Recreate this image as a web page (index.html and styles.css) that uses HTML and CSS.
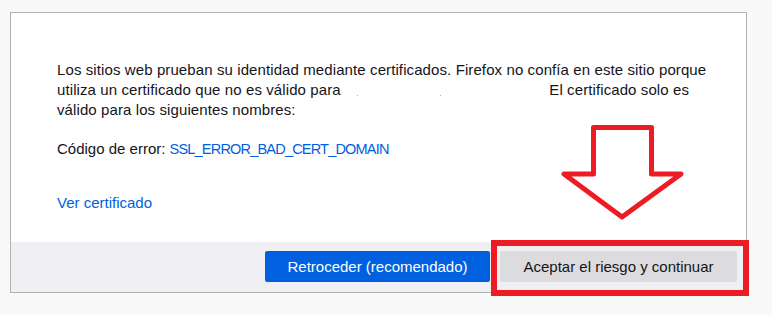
FILE: index.html
```html
<!DOCTYPE html>
<html lang="es">
<head>
    <meta charset="UTF-8">
    <meta name="viewport" content="width=device-width, initial-scale=1.0">
    <title>Advertencia: riesgo potencial de seguridad</title>
    <link rel="stylesheet" href="styles.css">
</head>
<body>
    <div class="page">
        <div class="advanced-panel">
            <div class="panel-body">
                <p class="desc">
                    Los sitios web prueban su identidad mediante certificados. Firefox no confía en este sitio porque
                    utiliza un certificado que no es válido para <span class="redacted"></span> El certificado solo es
                    válido para los siguientes nombres:
                </p>

                <p class="error-code">Código de error: <a href="#" class="link code">SSL_ERROR_BAD_CERT_DOMAIN</a></p>

                <p class="view-cert"><a href="#" class="link">Ver certificado</a></p>
            </div>

            <div class="panel-footer">
                <button class="btn btn-primary">Retroceder (recomendado)</button>
                <button class="btn btn-secondary">Aceptar el riesgo y continuar</button>
            </div>
        </div>

        <!-- screenshot annotation -->
        <svg class="mark-arrow" width="135" height="110" viewBox="0 0 135 110">
            <polygon points="38.5,7.5 96.5,7.5 96.5,54 126,54 67,97 9,54 38.5,54"
                     fill="none" stroke="#ed1c24" stroke-width="5" stroke-linejoin="round"/>
        </svg>
        <div class="mark-box"></div>
    </div>
</body>
</html>
```

FILE: styles.css
```css
* {
    margin: 0;
    padding: 0;
    box-sizing: border-box;
}

body {
    font-family: 'Liberation Sans', Arial, sans-serif;
    font-size: 15px;
    color: #15141a;
    background: #f9f9fa;
}

.page {
    position: relative;
    width: 772px;
    height: 315px;
    padding: 12px 0 0 10px;
}

.advanced-panel {
    width: 737px;
    height: 281px;
    background: white;
    border: 1px solid #b1b1b3;
    display: flex;
    flex-direction: column;
}

.panel-body {
    flex: 1;
    padding: 47px 20px 0 46px;
}

.desc {
    line-height: 20px;
    width: 670px;
    letter-spacing: 0.1px;
}

/* hidden host name, only two stray pixels remain */
.redacted {
    display: inline-block;
    width: 200px;
    height: 1px;
    margin-bottom: -1px;
    background:
        linear-gradient(#9fb5d8, #9fb5d8) 12px 0 / 1px 1px no-repeat,
        linear-gradient(#9fb5d8, #9fb5d8) 95px 0 / 1px 1px no-repeat;
}

.error-code {
    margin-top: 19px;
    line-height: 20px;
}

.view-cert {
    margin-top: 34px;
    line-height: 20px;
}

.link {
    color: #0060df;
    text-decoration: none;
}

.code {
    font-size: 14.5px;
    letter-spacing: -0.8px;
}

.panel-footer {
    height: 50px;
    background: #f0f0f4;
    display: flex;
    justify-content: flex-end;
    align-items: flex-start;
    gap: 10px;
    padding: 9px 9px 0 0;
}

.btn {
    height: 31px;
    border: none;
    border-radius: 2px;
    font-family: inherit;
    font-size: 15px;
    cursor: pointer;
}

.btn-primary {
    width: 225px;
    background: #0060df;
    color: white;
}

.btn-secondary {
    width: 237px;
    background: #dcdcdf;
    color: #15141a;
}

.mark-arrow {
    position: absolute;
    left: 555px;
    top: 120px;
}

.mark-box {
    position: absolute;
    left: 491px;
    top: 240px;
    width: 258px;
    height: 56px;
    border: 6px solid #ed1c24;
}
```
